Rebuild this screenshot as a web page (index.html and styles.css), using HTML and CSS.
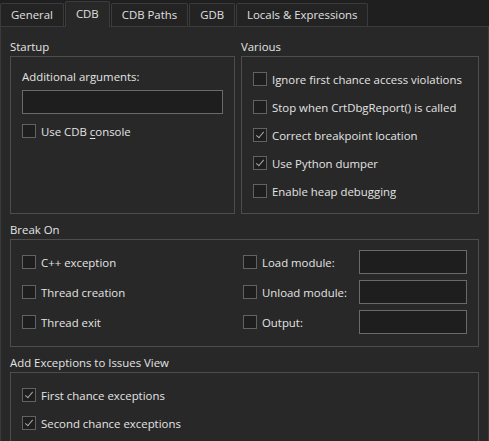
FILE: index.html
```html
<!DOCTYPE html>
<html>
<head>
<meta charset="utf-8">
<link rel="stylesheet" href="styles.css">
</head>
<body>
<div class="tabbar">
  <div class="tab">General</div>
  <div class="tab active">CDB</div>
  <div class="tab">CDB Paths</div>
  <div class="tab">GDB</div>
  <div class="tab">Locals &amp; Expressions</div>
</div>
<div class="panel">
  <div class="toprow">
    <section class="group">
      <div class="gtitle">Startup</div>
      <div class="gbox startup">
        <div class="lbl">Additional arguments:</div>
        <div class="input wide"></div>
        <label class="check"><span class="cb"></span><span>Use CDB <u>c</u>onsole</span></label>
      </div>
    </section>
    <section class="group">
      <div class="gtitle">Various</div>
      <div class="gbox list">
        <label class="check"><span class="cb"></span><span>Ignore first chance access violations</span></label>
        <label class="check"><span class="cb"></span><span>Stop when CrtDbgReport() is called</span></label>
        <label class="check"><span class="cb on"></span><span>Correct breakpoint location</span></label>
        <label class="check"><span class="cb on"></span><span>Use Python dumper</span></label>
        <label class="check"><span class="cb"></span><span>Enable heap debugging</span></label>
      </div>
    </section>
  </div>
  <section class="group">
    <div class="gtitle">Break On</div>
    <div class="gbox breakon">
      <label class="check"><span class="cb"></span><span>C++ exception</span></label>
      <label class="check"><span class="cb"></span><span>Load module:</span></label>
      <div class="input"></div>
      <label class="check"><span class="cb"></span><span>Thread creation</span></label>
      <label class="check"><span class="cb"></span><span>Unload module:</span></label>
      <div class="input"></div>
      <label class="check"><span class="cb"></span><span>Thread exit</span></label>
      <label class="check"><span class="cb"></span><span>Output:</span></label>
      <div class="input"></div>
    </div>
  </section>
  <section class="group grow">
    <div class="gtitle">Add Exceptions to Issues View</div>
    <div class="gbox list last">
      <label class="check"><span class="cb on"></span><span>First chance exceptions</span></label>
      <label class="check"><span class="cb on"></span><span>Second chance exceptions</span></label>
    </div>
  </section>
</div>
</body>
</html>
```
FILE: styles.css
```css
html, body {
  margin: 0;
  padding: 0;
  height: 100%;
  overflow: hidden;
}
body {
  background: #1f1f1f;
  color: #e4e4e4;
  font-family: "Open Sans", "Noto Sans", sans-serif;
  font-size: 11.4px;
}
.tabbar {
  display: flex;
  align-items: flex-end;
  gap: 1px;
  height: 26px;
}
.tab {
  height: 22px;
  line-height: 22px;
  padding: 0 10px;
  background: #232323;
  border: 1px solid #3b3b3b;
  border-bottom: none;
  border-radius: 2px 2px 0 0;
  color: #e0e0e0;
  white-space: nowrap;
}
.tab.active {
  height: 25px;
  line-height: 24px;
  background: #282828;
  margin-bottom: -1px;
  position: relative;
  z-index: 1;
}
.panel {
  background: #282828;
  border: 1px solid #3b3b3b;
  border-bottom: none;
  height: 415px;
  padding: 11px 9px 0 9px;
  box-sizing: border-box;
  display: flex;
  flex-direction: column;
  gap: 7px;
  overflow: hidden;
}
.toprow {
  display: grid;
  grid-template-columns: 225px 238px;
  gap: 6px;
}
.gtitle {
  height: 18px;
  line-height: 17px;
}
.gbox {
  border: 1px solid #4d4d4d;
  box-sizing: border-box;
}
.startup {
  height: 158px;
  padding: 12px 11px 0 11px;
  display: flex;
  flex-direction: column;
}
.lbl {
  line-height: 16px;
  height: 16px;
}
.input {
  height: 24px;
  box-sizing: border-box;
  border: 1px solid #6a6a6a;
  background: #1e1e1e;
}
.input.wide {
  margin-top: 5px;
  margin-bottom: 9px;
}
.check {
  display: flex;
  align-items: center;
  gap: 5px;
  height: 16px;
  white-space: nowrap;
}
.cb {
  width: 14px;
  height: 14px;
  box-sizing: border-box;
  border: 1px solid #626262;
  background: #1e1e1e;
  flex: none;
  position: relative;
}
.cb.on::after {
  content: "";
  position: absolute;
  left: 4px;
  top: 1px;
  width: 3px;
  height: 7px;
  border: solid #a8a8a8;
  border-width: 0 1.5px 1.5px 0;
  transform: rotate(40deg);
}
.list {
  height: 158px;
  padding: 12px 11px 0 11px;
  display: flex;
  flex-direction: column;
  gap: 8px;
}
.list .check {
  height: 20px;
}
.grow {
  flex: 1;
  display: flex;
  flex-direction: column;
}
.list.last {
  height: auto;
  flex: 1;
  border-bottom: none;
}
.breakon {
  height: 108px;
  padding: 10px 11px 0 11px;
  display: grid;
  grid-template-columns: 221px 116px 108px;
  grid-auto-rows: 24px;
  row-gap: 6px;
}
.breakon .check {
  height: 24px;
}
u {
  text-decoration: underline;
  text-underline-offset: 2px;
}
```
